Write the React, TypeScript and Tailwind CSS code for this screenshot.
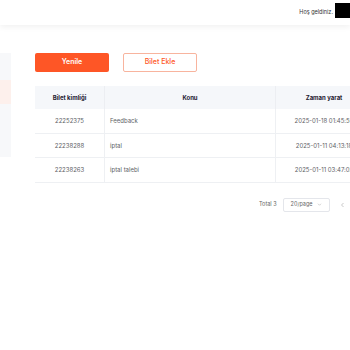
import React from "react";

const rows = [
  { id: "22252375", topic: "Feedback", time: "2025-01-18 01:45:59" },
  { id: "22238288", topic: "iptal", time: "2025-01-11 04:13:18" },
  { id: "22238263", topic: "iptal talebi", time: "2025-01-11 03:47:02" },
];

export default function App() {
  return (
    <div className="relative h-[350px] w-[350px] overflow-hidden bg-white text-[#333] [font-family:Inter,'Noto_Sans',sans-serif]">
      {/* top bar */}
      <header className="flex h-[25px] items-center justify-end bg-white shadow-[0_2px_6px_rgba(0,0,0,0.06)]">
        <span className="mr-[2px] text-[5.5px] text-[#333]">Hoş geldiniz.</span>
        <div className="mb-[5px] h-[15px] w-[15px] bg-black" />
      </header>

      <div className="flex">
        {/* collapsed side menu */}
        <aside className="mt-[28px] flex h-[104px] w-[11px] shrink-0 flex-col bg-[#f7f8fa]">
          <div className="h-[27px]" />
          <div className="h-[24px] bg-[#fdf0ec]" />
        </aside>

        <main className="ml-[24px] min-w-0 flex-1 pt-[28px]">
          <div className="flex gap-[14px]">
            <button className="h-[19px] w-[74px] rounded-[2px] bg-[#fe5626] text-[7px] font-semibold text-white">
              Yenile
            </button>
            <button className="h-[19px] w-[74px] rounded-[2px] border border-[#f8b49e] bg-white text-[7px] font-medium text-[#fe5626]">
              Bilet Ekle
            </button>
          </div>

          <div className="mt-[14px] w-[340px] text-[6px]">
            <div className="flex h-[23px] items-center bg-[#f5f7fa] font-bold text-[#1f2133]">
              <div className="flex h-full w-[70px] items-center justify-center border-r border-[#eceef2]">Bilet kimliği</div>
              <div className="flex h-full w-[171px] items-center justify-center border-r border-[#eceef2]">Konu</div>
              <div className="flex w-[96px] justify-center">Zaman yarat</div>
            </div>
            {rows.map((r) => (
              <div key={r.id} className="flex h-[24.5px] items-center border-b border-[#eef0f3] text-[#606266]">
                <div className="flex h-full w-[70px] items-center justify-center border-r border-[#eef0f3]">{r.id}</div>
                <div className="flex h-full w-[171px] items-center border-r border-[#eef0f3] pl-[5px]">{r.topic}</div>
                <div className="flex w-[96px] justify-center">{r.time}</div>
              </div>
            ))}
          </div>

          <div className="mt-[15px] flex items-center text-[5.5px] text-[#666]">
            <span className="ml-[224px]">Total 3</span>
            <div className="ml-[6px] flex h-[14px] w-[47px] items-center justify-between rounded-[2px] border border-[#e4e6eb] px-[7px] text-[#666]">
              <span>20/page</span>
              <svg width="5" height="5" viewBox="0 0 10 10" fill="none" stroke="#bbb" strokeWidth="1.3">
                <path d="M2 3.5l3 3 3-3" />
              </svg>
            </div>
            <svg className="ml-[10px]" width="5" height="6" viewBox="0 0 10 12" fill="none" stroke="#aaa" strokeWidth="1.3">
              <path d="M7 2L3 6l4 4" />
            </svg>
          </div>
        </main>
      </div>
    </div>
  );
}
